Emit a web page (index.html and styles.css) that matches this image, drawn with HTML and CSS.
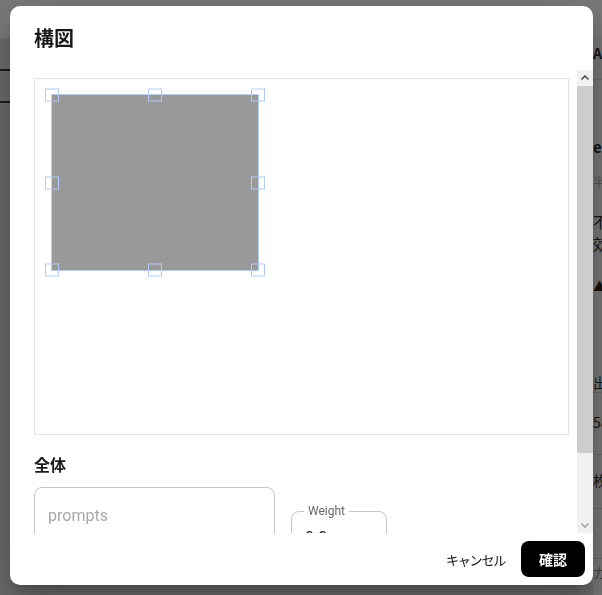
FILE: index.html
```html
<!DOCTYPE html>
<html lang="ja">
<head>
<meta charset="utf-8">
<title>構図</title>
<link rel="stylesheet" href="styles.css">
</head>
<body>
<div class="app">
  <div class="topbar"></div>
  <div class="main">
    <div class="work">
      <svg class="curve" width="24" height="40" viewBox="0 0 24 40"><path d="M0 1 H9 Q21 1 21 17 Q21 33 9 33 H0" fill="none" stroke="#000" stroke-width="1.3"/></svg>
    </div>
    <div class="side">
      <div class="row row-a">API</div>
      <div class="row row-es">es</div>
      <div class="row row-han">半径</div>
      <div class="row row-fu">不透明度</div>
      <div class="row row-ko">効果</div>
      <div class="row row-tri">▲</div>
      <div class="row row-de">出力</div>
      <div class="row row-58">58</div>
      <div class="row row-mai">枚数</div>
      <div class="row row-gap"></div>
      <div class="row row-ga">ガイド</div>
    </div>
  </div>
</div>

<div class="dialog">
  <h2 class="dlg-title">構図</h2>
  <div class="dlg-body">
    <div class="dlg-content">
      <div class="canvas">
        <div class="box">
          <span class="h h-tl"></span><span class="h h-tc"></span><span class="h h-tr"></span>
          <span class="h h-ml"></span><span class="h h-mr"></span>
          <span class="h h-bl"></span><span class="h h-bc"></span><span class="h h-br"></span>
        </div>
      </div>
      <h3 class="section">全体</h3>
      <div class="fields">
        <div class="field prompts"><span class="ph">prompts</span></div>
        <fieldset class="field weight"><legend>Weight</legend><span class="val">0.0</span></fieldset>
      </div>
    </div>
    <div class="scrollbar">
      <div class="sb-btn"><svg width="16" height="16" viewBox="0 0 16 16"><path d="M4.5 9.5 L8 6 L11.5 9.5" fill="none" stroke="#505050" stroke-width="1.6"/></svg></div>
      <div class="sb-thumb"></div>
      <div class="sb-track"></div>
      <div class="sb-btn"><svg width="16" height="16" viewBox="0 0 16 16"><path d="M4.5 6.5 L8 10 L11.5 6.5" fill="none" stroke="#a3a3a3" stroke-width="1.6"/></svg></div>
    </div>
  </div>
  <div class="dlg-actions">
    <button class="btn-text">キャンセル</button>
    <button class="btn-primary">確認</button>
  </div>
</div>
</body>
</html>
```

FILE: styles.css
```css
* { box-sizing: border-box; }
html, body { margin: 0; padding: 0; }
body {
  width: 602px;
  height: 595px;
  overflow: hidden;
  background: #6c6c6c;
  font-family: "Noto Sans CJK JP", "Noto Sans", sans-serif;
}
.app { display: flex; flex-direction: column; height: 595px; }
.topbar { height: 38px; background: #7a7a7a; flex: none; }
.main { flex: 1; display: flex; }
.work { flex: 1; padding-top: 31px; }
.curve { display: block; }
.side {
  width: 9px;
  background: #777777;
  overflow: hidden;
  white-space: nowrap;
  font-size: 14px;
  color: #141414;
  display: flex;
  flex-direction: column;
}
.row { height: 20px; line-height: 20px; flex: none; }
.row-a { margin-top: 5px; font-weight: 700; height: 37px; border-bottom: 1px solid #6e6e6e; line-height: 20px; }
.row-es { margin-top: 57px; font-weight: 700; font-size: 15px; }
.row-han { margin-top: 15px; font-size: 12px; color: #555; }
.row-fu { margin-top: 20px; font-size: 15px; }
.row-ko { margin-top: 2px; font-size: 15px; }
.row-tri { margin-top: 22px; font-size: 13px; }
.row-de { margin-top: 76px; border-bottom: 1px solid #686868; height: 21px; }
.row-58 { margin-top: 19px; height: 43px; border-bottom: 1px solid #686868; }
.row-mai { margin-top: 15px; height: 39px; border-bottom: 1px solid #686868; }
.row-gap { height: 50px; border-bottom: 1px solid #686868; }
.row-ga { margin-top: 3px; color: #444; }

.dialog {
  position: fixed;
  left: 10px;
  top: 6px;
  width: 583px;
  height: 579px;
  background: #fff;
  border-radius: 10px;
  display: flex;
  flex-direction: column;
  overflow: hidden;
  box-shadow: 0 11px 15px -7px rgba(0,0,0,.2), 0 24px 38px 3px rgba(0,0,0,.14), 0 9px 46px 8px rgba(0,0,0,.12);
}
.dlg-title {
  margin: 0;
  height: 64px;
  flex: none;
  padding: 16px 24px;
  font-size: 20px;
  line-height: 32px;
  font-weight: 700;
  color: #1a1a1a;
}
.dlg-body { flex: 1; display: flex; min-height: 0; }
.dlg-content {
  flex: 1;
  overflow: hidden;
  padding: 8px 8px 0 24px;
}
.canvas {
  position: relative;
  height: 357px;
  border: 1px solid #e3e3e3;
  background: #fff;
}
.box {
  position: absolute;
  left: 16px;
  top: 15px;
  width: 208px;
  height: 177px;
  background: #999999;
  border: 1px solid #b4cdf6;
}
.h {
  position: absolute;
  width: 14px;
  height: 13px;
  border: 1.5px solid #b3cbf5;
  transform: translate(-50%, -50%);
}
.h-tl { left: 0; top: 0; }
.h-tc { left: 50%; top: 0; }
.h-tr { left: 100%; top: 0; }
.h-ml { left: 0; top: 50%; }
.h-mr { left: 100%; top: 50%; }
.h-bl { left: 0; top: 100%; }
.h-bc { left: 50%; top: 100%; }
.h-br { left: 100%; top: 100%; }

.section {
  margin: 17px 0 0;
  font-size: 16px;
  line-height: 24px;
  font-weight: 700;
  color: #1a1a1a;
}
.fields { display: flex; gap: 16px; margin-top: 11px; align-items: flex-start; }
.field {
  border: 1px solid #c4c4c4;
  border-radius: 8px;
  font-family: Roboto, "Noto Sans", sans-serif;
  font-size: 16px;
}
.prompts {
  width: 241px;
  height: 120px;
  padding: 16px 13px;
  line-height: 23px;
}
.ph { color: #a9a9a9; }
.weight {
  margin: 17px 0 0;
  width: 96px;
  height: 56px;
  padding: 0 13px;
  min-width: 0;
  line-height: 23px;
}
.weight legend {
  font-size: 12px;
  color: #666;
  padding: 0 4px;
  margin-left: -1px;
  line-height: 14px;
}
.val { display: block; margin-top: 8px; color: #222; }

.scrollbar {
  width: 16px;
  flex: none;
  display: flex;
  flex-direction: column;
  background: #f1f1f1;
}
.sb-btn { height: 16px; flex: none; }
.sb-btn svg { display: block; }
.sb-thumb { height: 367px; background: #cdcdcd; flex: none; }
.sb-track { flex: 1; }

.dlg-actions {
  height: 52px;
  flex: none;
  display: flex;
  justify-content: flex-end;
  align-items: center;
  gap: 8px;
  padding: 8px;
}
.btn-text {
  background: none;
  border: 0;
  font-family: "Noto Sans CJK JP", sans-serif;
  font-size: 13px;
  letter-spacing: -1.2px;
  color: #111;
  padding: 6px 8px;
  height: 36px;
}
.btn-primary {
  width: 64px;
  height: 36px;
  background: #000;
  color: #fff;
  border: 0;
  border-radius: 8px;
  font-family: "Noto Sans CJK JP", sans-serif;
  font-size: 14px;
  font-weight: 700;
  padding: 0;
}
```
